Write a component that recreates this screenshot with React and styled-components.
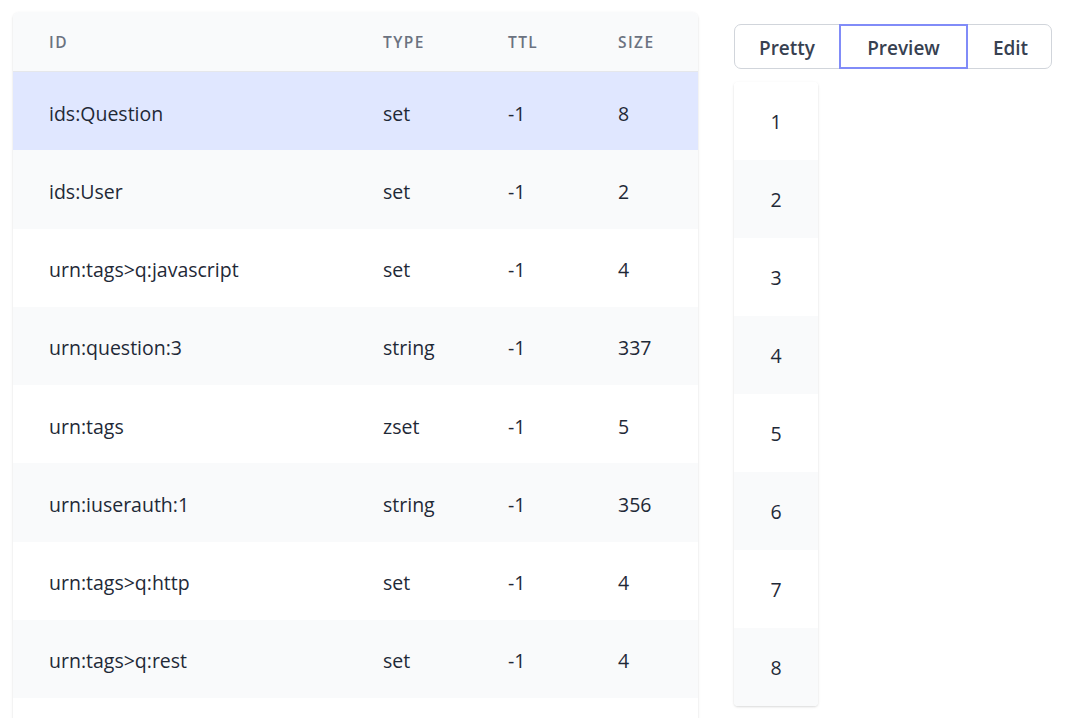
import React, { useState } from "react";
import styled, { createGlobalStyle } from "styled-components";

const GlobalStyle = createGlobalStyle`
  body {
    margin: 0;
    background: #ffffff;
    font-family: "Open Sans", "Noto Sans", sans-serif;
    color: #1f2937;
    overflow: hidden;
  }
`;

const Page = styled.div`
  display: flex;
  align-items: flex-start;
  gap: 36px;
  padding: 12px 0 0 13px;
  height: 706px;
  overflow: hidden;
`;

const Card = styled.div`
  width: 685px;
  flex-shrink: 0;
  align-self: stretch;
  margin-bottom: -10px;
  background: #ffffff;
  border-radius: 6px 6px 0 0;
  box-shadow: 0 1px 3px rgba(0, 0, 0, 0.1), 0 1px 2px rgba(0, 0, 0, 0.06);
  overflow: hidden;
`;

const Row = styled.div`
  display: grid;
  grid-template-columns: 334px 125px 110px 116px;
  align-items: center;
  height: 78.25px;
  padding-top: 4px;
  box-sizing: border-box;
  background: ${(p) => (p.$active ? "#e0e7ff" : p.$striped ? "#f9fafb" : "#ffffff")};
  cursor: pointer;
`;

const HeadRow = styled(Row)`
  height: 60px;
  padding-top: 1px;
  background: #f9fafb;
  border-bottom: 1px solid #e5e7eb;
  cursor: default;
`;

const HeadCell = styled.div`
  padding-left: 36px;
  font-size: 15.5px;
  font-weight: 600;
  letter-spacing: 1.4px;
  text-transform: uppercase;
  color: #6b7280;
`;

const Cell = styled.div`
  padding-left: 36px;
  font-size: 19.5px;
  color: #1f2937;
  white-space: nowrap;
`;

const Side = styled.div`
  display: flex;
  flex-direction: column;
  gap: 13px;
  padding-top: 12px;
`;

const ButtonGroup = styled.div`
  display: flex;
  width: 318px;
  height: 45px;
  border: 1px solid #d1d5db;
  border-radius: 7px;
  box-sizing: border-box;
`;

const Tab = styled.button`
  flex: ${(p) => p.$basis};
  border: ${(p) => (p.$selected ? "2px solid #818cf8" : "2px solid transparent")};
  margin: -1px 0;
  padding: 2px 0 0;
  background: transparent;
  font-family: inherit;
  font-size: 19px;
  font-weight: 600;
  color: #374151;
  cursor: pointer;
`;

const Lines = styled.div`
  width: 84px;
  border-radius: 4px;
  box-shadow: 0 1px 3px rgba(0, 0, 0, 0.1), 0 1px 2px rgba(0, 0, 0, 0.06);
  overflow: hidden;
`;

const Line = styled.div`
  display: flex;
  align-items: center;
  justify-content: center;
  height: 78px;
  font-size: 19.5px;
  color: #1f2937;
  background: ${(p) => (p.$striped ? "#f9fafb" : "#ffffff")};
`;

const keys = [
  { id: "ids:Question", type: "set", ttl: -1, size: 8 },
  { id: "ids:User", type: "set", ttl: -1, size: 2 },
  { id: "urn:tags>q:javascript", type: "set", ttl: -1, size: 4 },
  { id: "urn:question:3", type: "string", ttl: -1, size: 337 },
  { id: "urn:tags", type: "zset", ttl: -1, size: 5 },
  { id: "urn:iuserauth:1", type: "string", ttl: -1, size: 356 },
  { id: "urn:tags>q:http", type: "set", ttl: -1, size: 4 },
  { id: "urn:tags>q:rest", type: "set", ttl: -1, size: 4 },
];

export default function App() {
  const [selected, setSelected] = useState(0);
  const [view, setView] = useState("Preview");

  return (
    <>
      <GlobalStyle />
      <Page>
        <Card>
          <HeadRow>
            <HeadCell>ID</HeadCell>
            <HeadCell>Type</HeadCell>
            <HeadCell>TTL</HeadCell>
            <HeadCell>Size</HeadCell>
          </HeadRow>
          {keys.map((k, i) => (
            <Row
              key={k.id}
              $active={i === selected}
              $striped={i % 2 === 1}
              onClick={() => setSelected(i)}
            >
              <Cell>{k.id}</Cell>
              <Cell>{k.type}</Cell>
              <Cell>{k.ttl}</Cell>
              <Cell>{k.size}</Cell>
            </Row>
          ))}
        </Card>
        <Side>
          <ButtonGroup>
            {[
              ["Pretty", 104],
              ["Preview", 129],
              ["Edit", 85],
            ].map(([name, w]) => (
              <Tab
                key={name}
                $basis={`0 0 ${w}px`}
                $selected={view === name}
                onClick={() => setView(name)}
              >
                {name}
              </Tab>
            ))}
          </ButtonGroup>
          <Lines>
            {Array.from({ length: Math.min(keys[selected].size, 8) }, (_, i) => (
              <Line key={i} $striped={i % 2 === 1}>
                {i + 1}
              </Line>
            ))}
          </Lines>
        </Side>
      </Page>
    </>
  );
}
